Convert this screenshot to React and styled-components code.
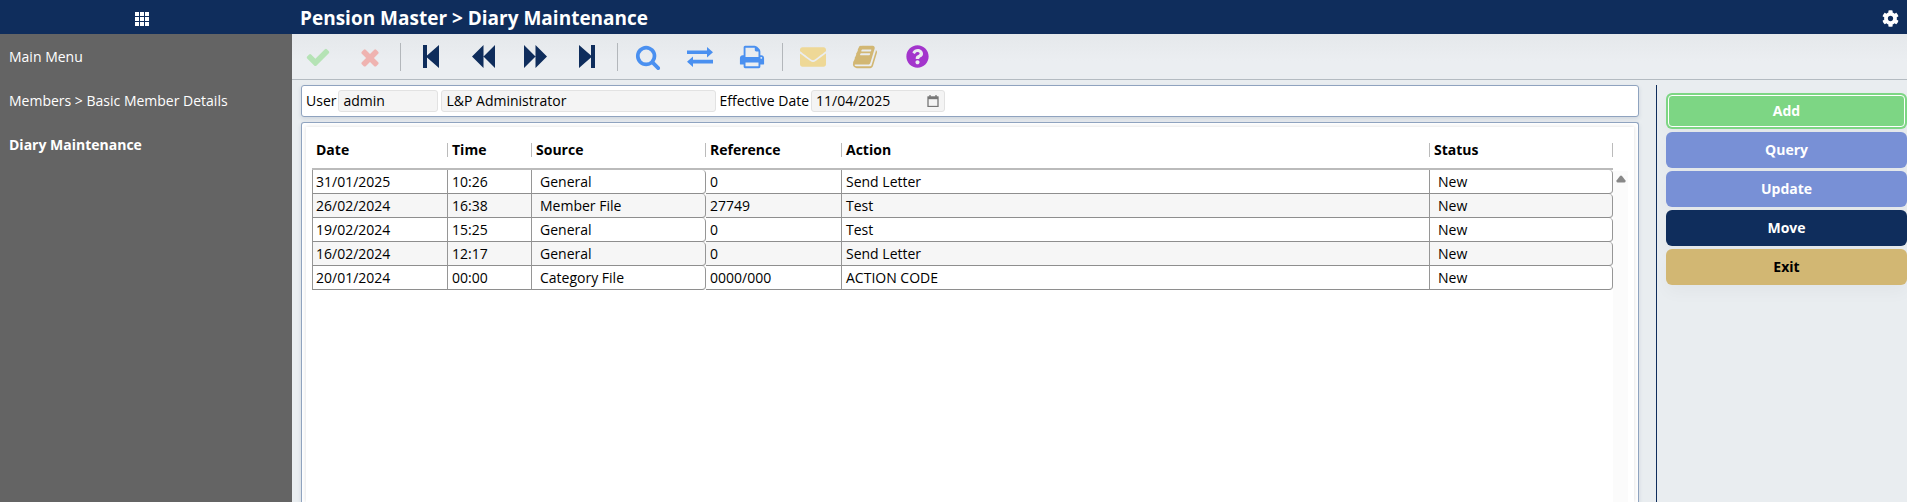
import React from "react";
import styled, { createGlobalStyle, css } from "styled-components";
import { FaCog, FaEnvelope, FaQuestionCircle } from "react-icons/fa";

const navy = "#0f2d5c";

const GlobalStyle = createGlobalStyle`
  * { box-sizing: border-box; }
  html, body, #root { height: 100%; }
  body {
    margin: 0;
    overflow: hidden;
    font-family: "Open Sans", "Noto Sans", sans-serif;
    font-size: 14px;
    line-height: 20px;
    color: #000;
    background: #e9edf0;
  }
  button, input { font: inherit; color: inherit; }
`;

const Page = styled.div`
  display: grid;
  grid-template-columns: 292px minmax(0, 1fr);
  grid-template-rows: 34px minmax(0, 1fr);
  min-height: 100vh;
  height: 100%;
`;

const SideHead = styled.div`
  display: flex;
  justify-content: center;
  align-items: center;
  padding: 4px 8px 0 0;
  background: ${navy};
`;

const TitleBar = styled.header`
  display: flex;
  justify-content: space-between;
  align-items: center;
  padding: 2px 8px 0 8px;
  background: ${navy};
  color: #fff;
`;

const Title = styled.h1`
  margin: 0;
  font-size: 19px;
  line-height: 28px;
  font-weight: 700;
`;

const PlainButton = styled.button`
  display: inline-flex;
  align-items: center;
  justify-content: center;
  padding: 0;
  border: 0;
  background: none;
  color: #fff;
  cursor: pointer;
`;

const Sidebar = styled.nav`
  display: flex;
  flex-direction: column;
  gap: 24px;
  padding: 13px 9px;
  background: #646464;
`;

const NavLink = styled.a`
  color: #fff;
  text-decoration: none;
  font-weight: ${(p) => (p.$current ? 700 : 400)};
`;

const Main = styled.main`
  display: flex;
  flex-direction: column;
  min-height: 0;
`;

const Toolbar = styled.div`
  display: flex;
  align-items: center;
  flex: none;
  height: 46px;
  border-bottom: 1px solid #b4bbc1;
  background: linear-gradient(#e5e8eb, #ebeef1 60%);
`;

const ToolButton = styled(PlainButton)`
  width: 52px;
  height: 36px;
  color: ${(p) => p.$color};
`;

const Divider = styled.span`
  width: 1px;
  height: 28px;
  margin: 0 4px;
  background: #b3b7bb;
`;

const Workspace = styled.div`
  display: flex;
  flex: 1;
  min-height: 0;
  padding: 5px 0 0 9px;
`;

const Panels = styled.div`
  display: flex;
  flex: 1;
  flex-direction: column;
  gap: 5px;
  min-width: 0;
  margin-right: 17px;
`;

const panel = css`
  border: 1px solid #8fa3bf;
  border-radius: 3px;
  background: #fff;
  box-shadow: 0 2px 4px rgba(60, 80, 110, 0.14);
`;

const FilterBar = styled.form`
  ${panel}
  display: flex;
  align-items: center;
  height: 32px;
  padding: 0 4px;
`;

const Field = styled.label`
  display: flex;
  align-items: center;
  gap: 2px;
  margin-right: 3px;
`;

const FieldBox = styled.span`
  display: flex;
  align-items: center;
  width: ${(p) => p.$width}px;
  height: 22px;
  padding: 0 5px 0 4px;
  border: 1px solid #e2e2e2;
  border-radius: 3px;
  background: #f4f4f4;
`;

const TextInput = styled.input`
  flex: 1;
  min-width: 0;
  height: 20px;
  padding: 0;
  border: 0;
  outline: 0;
  background: none;
`;

const GridPanel = styled.section`
  ${panel}
  display: flex;
  flex: 1;
  min-height: 0;
  border-bottom: 0;
  border-radius: 3px 3px 0 0;
  padding: 4px 4px 0;
`;

const GridCard = styled.div`
  display: flex;
  flex: 1;
  min-width: 0;
  padding: 0 6px;
  box-shadow: 0 0 4px rgba(0, 0, 0, 0.14);
`;

const Table = styled.table`
  flex: 1;
  align-self: flex-start;
  width: 100%;
  table-layout: fixed;
  border-collapse: separate;
  border-spacing: 0;
`;

const Col = styled.col`
  width: ${(p) => (p.$width ? `${p.$width}px` : "auto")};
`;

const HeadCell = styled.th`
  height: 43px;
  padding: 4px 0 0;
  border-bottom: 2px solid #bbb;
  text-align: left;
  font-weight: 700;
`;

const HeadLabel = styled.span`
  display: block;
  height: 14px;
  line-height: 14px;
  padding-left: 4px;
  border-right: 1px solid #bbb;
`;

const Row = styled.tr`
  background: ${(p) => (p.$shaded ? "#f6f6f6" : "#fff")};
`;

const Cell = styled.td`
  height: 24px;
  padding: 0 0 0 ${(p) => (p.$inset ? 8 : 4)}px;
  border-right: 1px solid #969696;
  border-bottom: 1px solid #8e8e8e;
  border-bottom-right-radius: ${(p) => (p.$inset ? 4 : 0)}px;
  border-top-right-radius: ${(p) => (p.$inset ? 4 : 0)}px;
  line-height: 20px;
  white-space: nowrap;
  &:first-child { border-left: 1px solid #969696; padding-left: 3px; }
`;

const ScrollTrack = styled.div`
  width: 15px;
  margin: 44px 0 0;
  padding: 4px 0 0 3px;
  background: #fbfbfb;
  line-height: 0;
`;

const Actions = styled.aside`
  display: flex;
  flex-direction: column;
  gap: 3px;
  width: 251px;
  padding: 8px 0 0 9px;
  border-left: 1px solid ${navy};
`;

const tones = {
  green: ["#7dd684", "#fff"],
  blue: ["#7890d6", "#fff"],
  navy: [navy, "#fff"],
  gold: ["#d2b773", "#000"],
};

const ActionButton = styled.button`
  height: 36px;
  padding: 0;
  border: 0;
  border-radius: 6px;
  background: ${(p) => tones[p.$tone][0]};
  color: ${(p) => tones[p.$tone][1]};
  font-weight: 700;
  box-shadow: 0 8px 16px rgba(0, 0, 0, 0.03);
  cursor: pointer;
  ${(p) => p.$active && css`outline: 1px solid #fff; outline-offset: -3px;`}
`;

const WaffleIcon = () => (
  <svg width="14" height="14" viewBox="0 0 14 14" fill="#fff" aria-hidden="true">
    {[0, 5, 10].map((y) => [0, 5, 10].map((x) => <rect key={`${x}-${y}`} x={x} y={y} width="4" height="4" />))}
  </svg>
);

const Glyph = ({ d }) => (
  <svg width="26" height="26" viewBox="0 0 1792 1792" fill="currentColor" aria-hidden="true">
    <path d={d} />
  </svg>
);

const glyphs = {
  check: "M1671 566q0 40-28 68l-724 724-136 136q-28 28-68 28t-68-28l-136-136-362-362q-28-28-28-68t28-68l136-136q28-28 68-28t68 28l294 295 656-657q28-28 68-28t68 28l136 136q28 28 28 68z",
  cross: "M1490 1322q0 40-28 68l-136 136q-28 28-68 28t-68-28l-294-294-294 294q-28 28-68 28t-68-28l-136-136q-28-28-28-68t28-68l294-294-294-294q-28-28-28-68t28-68l136-136q28-28 68-28t68 28l294 294 294-294q28-28 68-28t68 28l136 136q28 28 28 68t-28 68l-294 294 294 294q28 28 28 68z",
  search: "M1216 832q0-185-131.5-316.5t-316.5-131.5-316.5 131.5-131.5 316.5 131.5 316.5 316.5 131.5 316.5-131.5 131.5-316.5zm512 832q0 52-38 90t-90 38q-54 0-90-38l-343-342q-179 124-399 124-143 0-273.500-55.500t-225-150-150-225-55.500-273.500 55.500-273.500 150-225 225-150 273.500-55.500 273.500 55.500 225 150 150 225 55.500 273.500q0 220-124 399l343 343q37 37 37 90z",
  print: "M448 1536h896v-256h-896v256zm0-640h896v-384h-160q-40 0-68-28t-28-68v-160h-640v640zm1152 64q0-26-19-45t-45-19-45 19-19 45 19 45 45 19 45-19 19-45zm128 0v416q0 13-9.5 22.5t-22.5 9.5h-224v160q0 40-28 68t-68 28h-960q-40 0-68-28t-28-68v-160h-224q-13 0-22.5-9.5t-9.5-22.5v-416q0-79 56.5-135.5t135.5-56.5h64v-544q0-40 28-68t68-28h672q40 0 88 20t76 48l152 152q28 28 48 76t20 88v256h64q79 0 135.5 56.5t56.5 135.5z",
  book: "M1703 478q40 57 18 129l-275 906q-19 64-76.5 107.5t-122.5 43.5h-923q-77 0-148.5-53.5t-99.5-131.5q-24-67-2-127 0-4 3-27t4-37q1-8-3-21.5t-3-19.5q2-11 8-21t16.5-23.5 16.5-23.5q23-38 45-91.5t30-91.5q3-10 .5-30t-.5-28q3-11 17-28t17-23q21-36 42-92t25-90q1-9-2.5-32t.5-28q4-13 22-30.5t22-22.5q19-26 42.5-84.5t27.5-96.5q1-8-3-25.5t-2-26.5q2-8 9-18t18-23 17-21q8-12 16.5-30.5t15-35 16-36 19.5-32 26.5-23.5 36-11.5 47.5 5.5l-1 3q38-9 51-9h761q74 0 114 56t18 130l-274 906q-36 119-71.5 153.5t-128.5 34.5h-869q-27 0-38 15-11 16-1 43 24 70 144 70h923q29 0 56-15.5t35-41.5l300-987q7-22 5-57 38 15 59 43zm-1064 2q-4 13 2 22.5t20 9.5h608q13 0 25.5-9.5t16.5-22.5l21-64q4-13-2-22.5t-20-9.5h-608q-13 0-25.5 9.5t-16.5 22.5zm-83 256q-4 13 2 22.5t20 9.5h608q13 0 25.5-9.5t16.5-22.5l21-64q4-13-2-22.5t-20-9.5h-608q-13 0-25.5 9.5t-16.5 22.5z",
};

const FirstIcon = () => (
  <svg width="16" height="23" viewBox="0 0 16 23" fill="currentColor" aria-hidden="true">
    <path d="M0 0H4V10.5L16 0V23L4 12.5V23H0Z" />
  </svg>
);
const LastIcon = () => (
  <svg width="16" height="23" viewBox="0 0 16 23" fill="currentColor" aria-hidden="true">
    <path d="M16 0H12V10.5L0 0V23L12 12.5V23H16Z" />
  </svg>
);
const BackIcon = () => (
  <svg width="23" height="23" viewBox="0 0 23 23" fill="currentColor" aria-hidden="true">
    <path d="M11.5 0V23L0 11.5ZM23 0V23L11.5 11.5Z" />
  </svg>
);
const ForwardIcon = () => (
  <svg width="23" height="23" viewBox="0 0 23 23" fill="currentColor" aria-hidden="true">
    <path d="M0 0V23L11.5 11.5ZM11.5 0V23L23 11.5Z" />
  </svg>
);
const SwapIcon = () => (
  <svg width="26" height="20" viewBox="0 0 26 20" fill="currentColor" aria-hidden="true">
    <path d="M0 3.5H20V0L26 5.2L20 10.4V7H0ZM26 12.8H6V9.4L0 14.7L6 20V16.4H26Z" />
  </svg>
);
const CalendarIcon = () => (
  <svg width="12" height="12" viewBox="0 0 12 12" fill="none" stroke="#777" aria-hidden="true">
    <rect x="1" y="2" width="10" height="9.5" strokeWidth="1.3" />
    <path d="M1 3H11" strokeWidth="2.4" />
    <path d="M3 0V2M9 0V2" strokeWidth="1.3" />
  </svg>
);

const columns = [
  ["Date", 136], ["Time", 84], ["Source", 174], ["Reference", 136], ["Action", 0], ["Status", 183],
];
const insetColumns = [2, 5];
const entries = [
  ["31/01/2025", "10:26", "General", "0", "Send Letter", "New"],
  ["26/02/2024", "16:38", "Member File", "27749", "Test", "New"],
  ["19/02/2024", "15:25", "General", "0", "Test", "New"],
  ["16/02/2024", "12:17", "General", "0", "Send Letter", "New"],
  ["20/01/2024", "00:00", "Category File", "0000/000", "ACTION CODE", "New"],
];

export default function App() {
  return (
    <>
      <GlobalStyle />
      <Page>
        <SideHead>
          <PlainButton aria-label="Applications"><WaffleIcon /></PlainButton>
        </SideHead>
        <TitleBar>
          <Title>Pension Master &gt; Diary Maintenance</Title>
          <PlainButton aria-label="Settings"><FaCog size={17} /></PlainButton>
        </TitleBar>
        <Sidebar>
          <NavLink href="#main">Main Menu</NavLink>
          <NavLink href="#members">Members &gt; Basic Member Details</NavLink>
          <NavLink href="#diary" $current>Diary Maintenance</NavLink>
        </Sidebar>
        <Main>
          <Toolbar>
            <ToolButton aria-label="Accept" $color="#b5e3b5"><Glyph d={glyphs.check} /></ToolButton>
            <ToolButton aria-label="Cancel" $color="#efb3b0"><Glyph d={glyphs.cross} /></ToolButton>
            <Divider />
            <ToolButton aria-label="First" $color={navy}><FirstIcon /></ToolButton>
            <ToolButton aria-label="Previous" $color={navy}><BackIcon /></ToolButton>
            <ToolButton aria-label="Next" $color={navy}><ForwardIcon /></ToolButton>
            <ToolButton aria-label="Last" $color={navy}><LastIcon /></ToolButton>
            <Divider />
            <ToolButton aria-label="Search" $color="#4a90f0"><Glyph d={glyphs.search} /></ToolButton>
            <ToolButton aria-label="Switch" $color="#4a90f0"><SwapIcon /></ToolButton>
            <ToolButton aria-label="Print" $color="#4a90f0"><Glyph d={glyphs.print} /></ToolButton>
            <Divider />
            <ToolButton aria-label="Mail" $color="#eed896"><FaEnvelope size={26} /></ToolButton>
            <ToolButton aria-label="Diary" $color="#d2b773"><Glyph d={glyphs.book} /></ToolButton>
            <ToolButton aria-label="Help" $color="#a335cc"><FaQuestionCircle size={23} /></ToolButton>
          </Toolbar>
          <Workspace>
            <Panels>
              <FilterBar>
                <Field>User<FieldBox $width={100}><TextInput defaultValue="admin" /></FieldBox></Field>
                <Field><FieldBox $width={275}><TextInput aria-label="User name" defaultValue="L&P Administrator" /></FieldBox></Field>
                <Field>Effective Date
                  <FieldBox $width={134}><TextInput defaultValue="11/04/2025" /><CalendarIcon /></FieldBox>
                </Field>
              </FilterBar>
              <GridPanel>
                <GridCard>
                  <Table>
                    <colgroup>{columns.map(([name, width]) => <Col key={name} $width={width} />)}</colgroup>
                    <thead>
                      <tr>{columns.map(([name]) => <HeadCell key={name}><HeadLabel>{name}</HeadLabel></HeadCell>)}</tr>
                    </thead>
                    <tbody>
                      {entries.map((entry, r) => (
                        <Row key={entry[0]} $shaded={r % 2 === 1}>
                          {entry.map((value, c) => <Cell key={c} $inset={insetColumns.includes(c)}>{value}</Cell>)}
                        </Row>
                      ))}
                    </tbody>
                  </Table>
                  <ScrollTrack>
                    <svg width="10" height="8" viewBox="0 0 10 8" fill="#888" aria-hidden="true">
                      <path d="M4 1Q5 0 6 1L9.5 5.5Q10 7.5 8.5 7.5H1.5Q0 7.5 .5 5.5Z" />
                    </svg>
                  </ScrollTrack>
                </GridCard>
              </GridPanel>
            </Panels>
            <Actions>
              <ActionButton $tone="green" $active>Add</ActionButton>
              <ActionButton $tone="blue">Query</ActionButton>
              <ActionButton $tone="blue">Update</ActionButton>
              <ActionButton $tone="navy">Move</ActionButton>
              <ActionButton $tone="gold">Exit</ActionButton>
            </Actions>
          </Workspace>
        </Main>
      </Page>
    </>
  );
}
